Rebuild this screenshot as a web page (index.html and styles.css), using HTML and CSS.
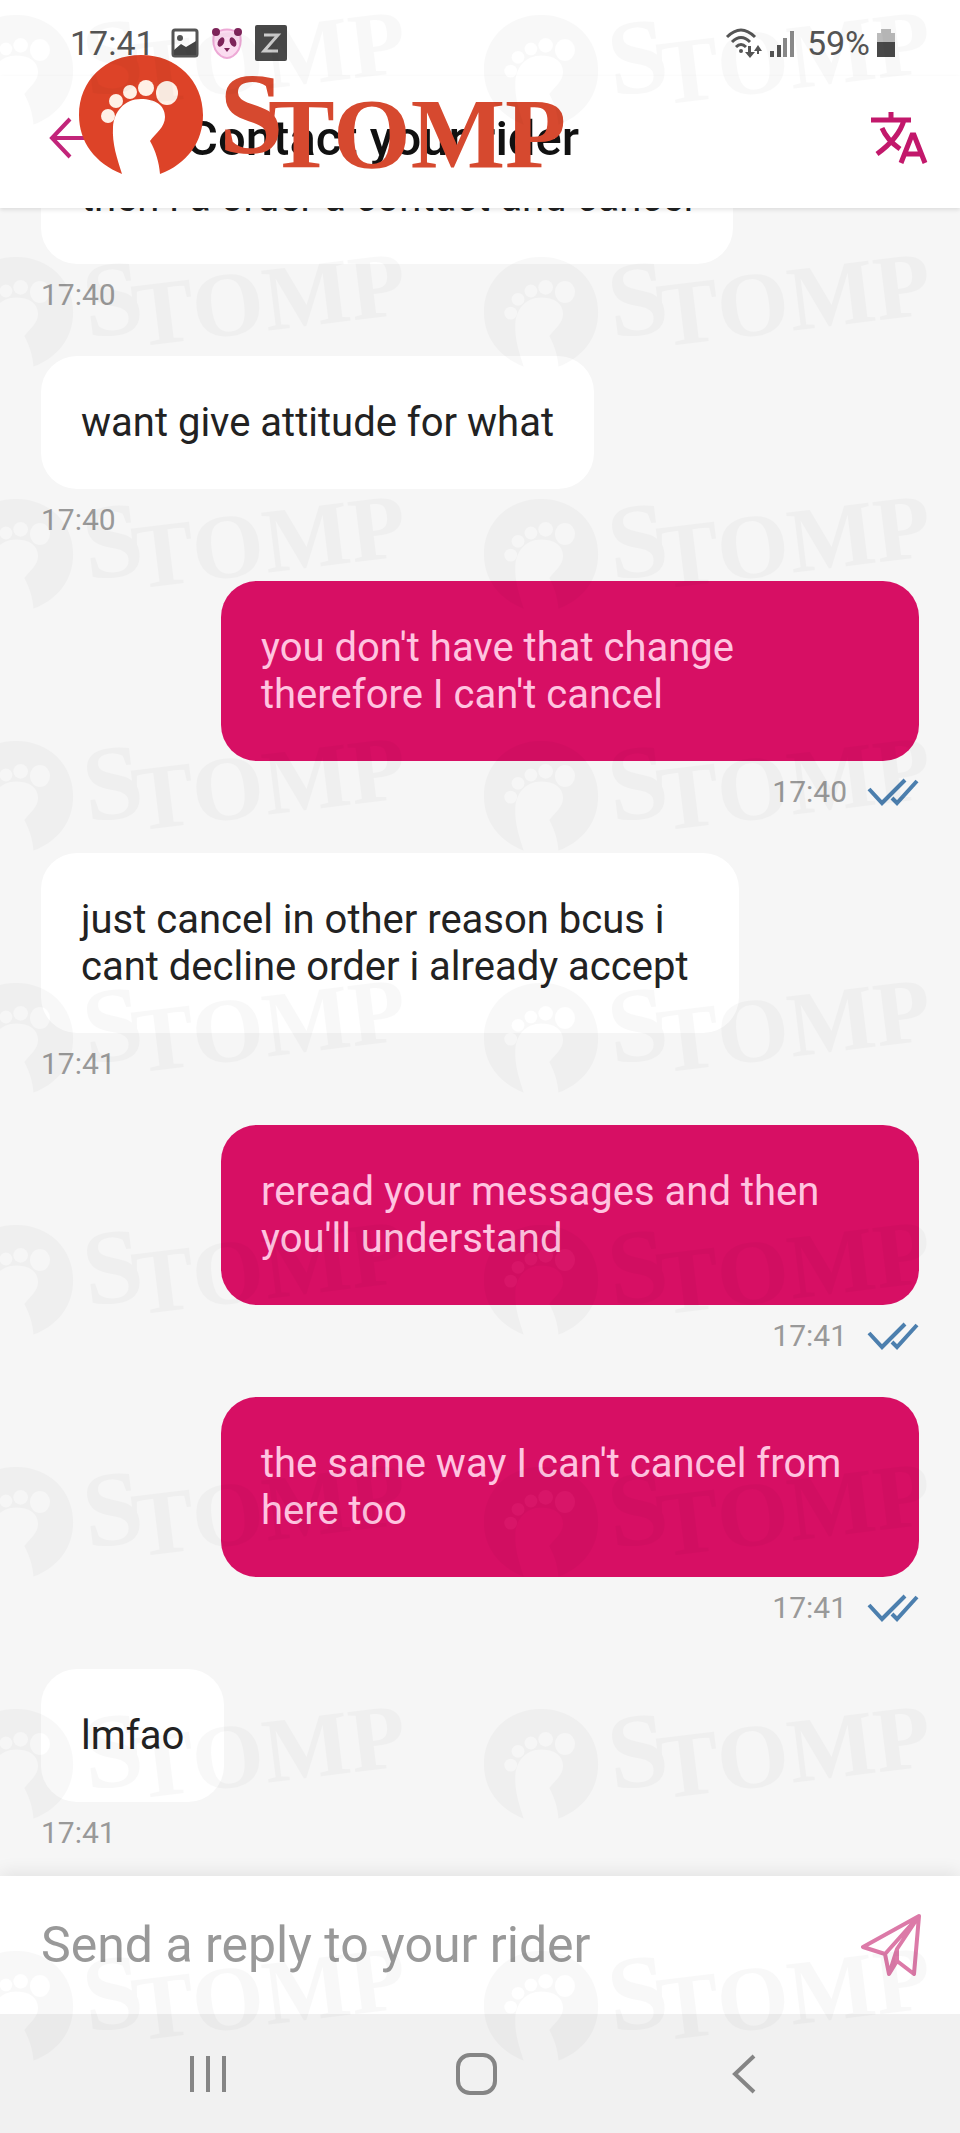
FILE: index.html
```html
<!DOCTYPE html>
<html lang="en">
<head>
  <meta charset="UTF-8">
  <meta name="viewport" content="width=device-width, initial-scale=1.0">
  <title>Contact your rider</title>
  <link rel="stylesheet" href="styles.css">
</head>
<body>
  <div class="status-bar">
    <span>17:41</span>
    <svg class="picture-icon" width="28" height="30" viewBox="0 0 28 30">
      <rect x="2" y="2" width="24" height="26" rx="2" fill="#fff" stroke="#555" stroke-width="3"/>
      <path d="M3 22l7-6 5 3 10-6v14H3z" fill="#444"/>
      <circle cx="9" cy="10" r="3" fill="#555"/>
    </svg>
    <svg class="panda-icon" width="32" height="34" viewBox="0 0 32 34">
      <path d="M3 8q13-9 26 0 3 15-7 22-6 4-12 0Q0 23 3 8z" fill="#fbdcf0" stroke="#eda9d6" stroke-width="2"/>
      <circle cx="5" cy="6" r="4" fill="#7d2459"/>
      <circle cx="27" cy="6" r="4" fill="#7d2459"/>
      <ellipse cx="10" cy="16" rx="3" ry="5" fill="#7d2459" transform="rotate(25 10 16)"/>
      <ellipse cx="22" cy="16" rx="3" ry="5" fill="#7d2459" transform="rotate(-25 22 16)"/>
      <path d="M13 22h6l-3 4z" fill="#7d2459"/>
    </svg>
    <svg width="32" height="36" viewBox="0 0 32 36">
      <rect width="32" height="36" rx="2" fill="#484848"/>
      <path d="M9 10h14L9 26h14" fill="none" stroke="#ccc" stroke-width="3"/>
    </svg>
    <div class="status-right">
      <svg width="38" height="30" viewBox="0 0 38 30">
        <g fill="none" stroke="#555" stroke-width="3">
          <path d="M2 9q14-14 28 0M7 14q9-9 18 0M11 19q5-5 10 0"/>
        </g>
        <circle cx="16" cy="23" r="2" fill="#555"/>
        <path d="M26 18v6h4l-5 6-5-6h3v-6zM34 26v-3h3l-4-6-4 6h3v3z" fill="#555"/>
      </svg>
      <svg width="26" height="30" viewBox="0 0 26 30">
        <path d="M1 23h4v6H1zM8 17h4v12H8z" fill="#555"/>
        <path d="M14 10h4v19h-4zM21 3h4v26h-4z" fill="#888"/>
      </svg>
      <span class="battery-text">59%</span>
      <svg width="20" height="30" viewBox="0 0 20 30">
        <path d="M5 1h10v4h4v10H1V5h4z" fill="#bbb"/>
        <path d="M1 14h18v15H1z" fill="#484848"/>
      </svg>
    </div>
  </div>

  <header class="header">
    <button type="button" class="icon-button" aria-label="Back">
      <svg width="52" height="46" viewBox="0 0 52 46">
        <path d="M50 23H4M22 4L4 23l18 19" fill="none" stroke="#c2257a" stroke-width="4"/>
      </svg>
    </button>
    <h1>Contact your rider</h1>
    <button type="button" class="icon-button" aria-label="Translate">
      <svg width="58" height="54" viewBox="0 0 58 54">
        <path d="M1 9h40M21 1v8M34 9q-5 18-27 34M12 17q5 12 18 21" fill="none" stroke="#c2186b" stroke-width="5"/>
        <path d="M31 52l11-28h2l11 28M35 43h16" fill="none" stroke="#c2186b" stroke-width="5"/>
      </svg>
    </button>
  </header>

  <main class="chat">
    <div class="message">
      <p class="bubble">then i a order a contact and cancel</p>
      <div class="time">17:40</div>
    </div>
    <div class="message">
      <p class="bubble">want give attitude for what</p>
      <div class="time">17:40</div>
    </div>
    <div class="message sent">
      <p class="bubble">you don't have that change therefore I can't cancel</p>
      <div class="time">17:40
        <svg class="ticks" width="52" height="28" viewBox="0 0 52 28"><path d="M2 11l13 14L38 2M25 20l5 5L50 3" /></svg>
      </div>
    </div>
    <div class="message">
      <p class="bubble">just cancel in other reason bcus i cant decline order i already accept</p>
      <div class="time">17:41</div>
    </div>
    <div class="message sent">
      <p class="bubble">reread your messages and then you'll understand</p>
      <div class="time">17:41
        <svg class="ticks" width="52" height="28" viewBox="0 0 52 28"><path d="M2 11l13 14L38 2M25 20l5 5L50 3" /></svg>
      </div>
    </div>
    <div class="message sent">
      <p class="bubble">the same way I can't cancel from here too</p>
      <div class="time">17:41
        <svg class="ticks" width="52" height="28" viewBox="0 0 52 28"><path d="M2 11l13 14L38 2M25 20l5 5L50 3" /></svg>
      </div>
    </div>
    <div class="message">
      <p class="bubble">lmfao</p>
      <div class="time">17:41</div>
    </div>
  </main>

  <form class="composer">
    <input type="text" aria-label="Reply" placeholder="Send a reply to your rider">
    <button type="button" class="icon-button" aria-label="Send">
      <svg width="60" height="62" viewBox="0 0 60 62">
        <path d="M58 2L2 33l22 7 4 20 8-13 17 13zM58 2L24 40M58 2L36 35v12M36 35l-8 25" fill="none" stroke="#dc7aa8" stroke-width="4" stroke-linejoin="round"/>
      </svg>
    </button>
  </form>

  <nav class="nav-bar">
    <button type="button" class="icon-button" aria-label="Recent apps">
      <svg width="42" height="42" viewBox="0 0 42 42"><path d="M5 3v36M21 3v36M37 3v36"/></svg>
    </button>
    <button type="button" class="icon-button" aria-label="Home">
      <svg width="42" height="42" viewBox="0 0 42 42"><rect x="3" y="2" width="37" height="38" rx="12"/></svg>
    </button>
    <button type="button" class="icon-button" aria-label="Back">
      <svg width="42" height="42" viewBox="0 0 42 42"><path d="M31 3L12 21l19 18"/></svg>
    </button>
  </nav>

  <svg class="stomp-logo" width="510" height="150" viewBox="0 0 510 150">
    <defs>
      <symbol id="stomp" overflow="visible">
        <path d="M43 119C16 108 0 87 0 60 0 26 26 0 62 0s62 26 62 60c0 27-16 49-43 59-1-12-4-22-10-33 6-8 15-14 15-24 0-12-10-18-24-18-17 0-27 13-28 28-1 17 4 31 9 47z"/>
      </symbol>
      <symbol id="toes" overflow="visible">
        <ellipse cx="88" cy="38" rx="11" ry="12"/>
        <circle cx="67" cy="33" r="8"/>
        <circle cx="51" cy="37" r="7"/>
        <circle cx="37" cy="46" r="7"/>
        <circle cx="29" cy="61" r="7"/>
      </symbol>
    </defs>
    <path class="sole" d="M42 120V80l-10-10 10-26h38l8 20-16 22 10 34z"/>
    <use href="#stomp" fill="#dd4328"/>
    <use href="#toes" fill="#fff0e6"/>
    <text class="logo-text" fill="#d6492f"><tspan class="logo-s" x="140" y="98">S</tspan><tspan x="189" y="112">TOMP</tspan></text>
  </svg>

  <svg class="watermark">
    <defs>
      <pattern id="marks" x="-45" y="209" width="525" height="242" patternUnits="userSpaceOnUse">
        <g transform="translate(4 48) scale(.92)">
          <use href="#stomp"/>
          <use href="#toes" fill="#fff"/>
          <text class="logo-text" transform="rotate(-7 140 90)"><tspan class="logo-s" x="140" y="88">S</tspan><tspan x="192" y="104">TOMP</tspan></text>
        </g>
      </pattern>
    </defs>
    <rect width="100%" height="100%" fill="url(#marks)"/>
  </svg>
</body>
</html>
```
FILE: styles.css
```css
* {
  box-sizing: border-box;
}
body {
  margin: 0;
  height: 100vh;
  display: flex;
  flex-direction: column;
  position: relative;
  overflow: hidden;
  font-family: Roboto, sans-serif;
  background-color: #f6f6f6;
}
button {
  cursor: pointer;
}
svg {
  display: block;
}

/* phone status bar */
.status-bar {
  display: flex;
  align-items: center;
  gap: 12px;
  height: 76px;
  padding: 10px 64px 0 70px;
  background-color: #fff;
  color: #555;
  font-size: 34px;
}
.picture-icon {
  margin-left: 4px;
}
.status-right {
  display: flex;
  align-items: center;
  gap: 6px;
  margin-left: auto;
}
.battery-text {
  margin-left: 6px;
}

.header {
  display: flex;
  align-items: center;
  height: 132px;
  padding: 0 32px 8px 48px;
  background-color: #fff;
  box-shadow: 0 2px 4px rgba(0, 0, 0, 0.1);
  z-index: 1;
}
.header h1 {
  flex: 1;
  margin: 0 0 0 86px;
  font-size: 49px;
  font-weight: 500;
  white-space: nowrap;
  color: #111;
}
.icon-button {
  padding: 0;
  border: none;
  background: none;
}

/* messages stick to the bottom, older ones slide under the header */
.chat {
  flex: 1;
  min-height: 0;
  display: flex;
  flex-direction: column;
  justify-content: flex-end;
  gap: 44px;
  padding: 0 41px 26px;
  overflow: hidden;
}
.message {
  display: flex;
  flex-direction: column;
  align-items: flex-start;
  gap: 14px;
}
.bubble {
  max-width: calc(100% - 180px);
  margin: 0;
  padding: 43px 40px;
  border-radius: 36px;
  background-color: #fff;
  color: #222;
  font-size: 40px;
  line-height: 47px;
}
.time {
  display: flex;
  align-items: center;
  gap: 20px;
  color: #999;
  font-size: 30px;
  line-height: 34px;
}
.sent {
  align-items: flex-end;
}
.sent .bubble {
  background-color: #d70f64;
  color: #ffc4e0;
}
.ticks {
  fill: none;
  stroke: #4c7fae;
  stroke-width: 4;
}

.composer {
  display: flex;
  align-items: center;
  height: 138px;
  padding: 0 39px 0 41px;
  background-color: #fff;
  box-shadow: 0 -4px 16px rgba(0, 0, 0, 0.08);
}
.composer input {
  flex: 1;
  min-width: 0;
  padding: 0;
  border: none;
  outline: none;
  background: none;
  font-family: inherit;
  font-size: 50px;
}
.composer input::placeholder {
  color: #999;
}

.nav-bar {
  display: flex;
  align-items: center;
  justify-content: space-around;
  height: 119px;
  padding: 0 82px 0 74px;
  background-color: #f1f1f1;
}
.nav-bar svg {
  fill: none;
  stroke: #858585;
  stroke-width: 4;
}

/* logo and watermark lie over the page */
.stomp-logo {
  position: absolute;
  top: 55px;
  left: 79px;
  z-index: 2;
  pointer-events: none;
}
.sole {
  fill: #fff;
}
.logo-text {
  font-family: "Liberation Serif", serif;
  font-size: 100px;
  font-weight: bold;
}
.logo-s {
  font-size: 116px;
}
.watermark {
  position: absolute;
  top: 0;
  left: 0;
  width: 100%;
  height: 100%;
  z-index: 3;
  opacity: 0.025;
  pointer-events: none;
}
```
